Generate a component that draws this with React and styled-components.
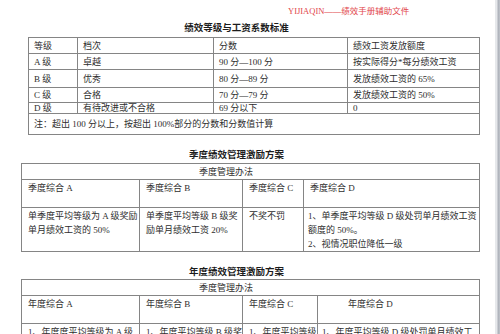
import React from "react";
import styled, { createGlobalStyle } from "styled-components";

const GlobalStyle = createGlobalStyle`
  html, body {
    margin: 0;
    padding: 0;
    background: #ffffff;
    overflow: hidden;
  }
  body {
    font-family: "Liberation Serif", "Noto Sans CJK SC", serif;
    color: #2b2b2b;
  }
`;

const Screen = styled.div`
  display: flex;
  width: 500px;
  height: 334px;
  overflow: hidden;
`;

const Page = styled.div`
  flex: 1;
  background: #fff;
  padding-left: 21px;
  padding-right: 15px;
`;

const Gutter = styled.div`
  width: 6px;
  background: linear-gradient(
    to right,
    #e6e8eb 0,
    #e6e8eb 2px,
    #aeb2ba 3px,
    #b3b7bf 4px,
    #d3d6db 6px
  );
`;

const Running = styled.div`
  height: 20px;
  padding-left: 267px;
  display: flex;
  align-items: center;
  font-size: 8.5px;
  color: #e2474c;
  white-space: nowrap;
`;

const Heading = styled.h2`
  margin: 0;
  padding-right: 28px;
  text-align: center;
  font-family: "Liberation Serif", "Noto Sans CJK SC", serif;
  font-weight: bold;
  font-size: 9.5px;
  line-height: ${(p) => p.$h}px;
  height: ${(p) => p.$h}px;
  color: #1c1c1c;
  white-space: nowrap;
`;

const Grid = styled.table`
  border-collapse: collapse;
  table-layout: fixed;
  width: ${(p) => p.$w}px;
  margin-left: ${(p) => p.$ml || 0}px;
  font-size: 9px;
`;

const Row = styled.tr`
  height: ${(p) => p.$h}px;
`;

const Cell = styled.td`
  border: 1px solid #858585;
  padding: ${(p) => (p.$top ? "1px" : "0")} 0 0 ${(p) => p.$pl ?? 5}px;
  vertical-align: ${(p) => (p.$top ? "top" : "middle")};
  line-height: ${(p) => (p.$top ? "14px" : "10px")};
  white-space: nowrap;
  overflow: hidden;
  color: #2e2e2e;
`;

const Spacer = styled.div`
  height: ${(p) => p.$h}px;
`;

const gradeRows = [
  ["A 级", "卓越", "90 分—100 分", "按实际得分*每分绩效工资", 16],
  ["B 级", "优秀", "80 分—89 分", "发放绩效工资的 65%", 18],
  ["C 级", "合格", "70 分—79 分", "发放绩效工资的 50%", 15],
  ["D 级", "有待改进或不合格", "69 分以下", "0", 11],
];

const Lines = ({ items }) =>
  items.map((t, i) => (
    <React.Fragment key={i}>
      {i > 0 && <br />}
      {t}
    </React.Fragment>
  ));

const PlanTable = ({ cols, heads, headPad = [], body, bodyH }) => (
  <Grid $w={458}>
    <colgroup>
      {cols.map((w, i) => (
        <col key={i} style={{ width: w }} />
      ))}
    </colgroup>
    <tbody>
      <Row $h={16}>
        <Cell colSpan={4} $pl={177}>
          季度管理办法
        </Cell>
      </Row>
      <Row $h={28}>
        {heads.map((h, i) => (
          <Cell key={h} $top $pl={headPad[i] ?? 6}>
            {h}
          </Cell>
        ))}
      </Row>
      <Row $h={bodyH}>
        {body.map((lines, i) => (
          <Cell key={i} $top $pl={i === 3 ? 4 : 6}>
            <Lines items={lines} />
          </Cell>
        ))}
      </Row>
    </tbody>
  </Grid>
);

export default function App() {
  return (
    <>
      <GlobalStyle />
      <Screen>
        <Page>
          <Running>YIJIAQIN——绩效手册辅助文件</Running>
          <Heading $h={17}>绩效等级与工资系数标准</Heading>
          <Grid $w={451} $ml={7}>
            <colgroup>
              <col style={{ width: 49 }} />
              <col style={{ width: 136 }} />
              <col style={{ width: 134 }} />
              <col style={{ width: 132 }} />
            </colgroup>
            <tbody>
              <Row $h={16}>
                <Cell>等级</Cell>
                <Cell>档次</Cell>
                <Cell>分数</Cell>
                <Cell>绩效工资发放额度</Cell>
              </Row>
              {gradeRows.map(([g, lvl, score, pay, h]) => (
                <Row key={g} $h={h}>
                  <Cell>{g}</Cell>
                  <Cell>{lvl}</Cell>
                  <Cell>{score}</Cell>
                  <Cell>{pay}</Cell>
                </Row>
              ))}
              <Row $h={21}>
                <Cell colSpan={4}>
                  注：超出 100 分以上，按超出 100%部分的分数和分数值计算
                </Cell>
              </Row>
            </tbody>
          </Grid>
          <Spacer $h={12} />
          <Heading $h={16}>季度绩效管理激励方案</Heading>
          <PlanTable
            cols={[118, 103, 61, 176]}
            heads={["季度综合 A", "季度综合 B", "季度综合 C", "季度综合 D"]}
            bodyH={44}
            body={[
              ["单季度平均等级为 A 级奖励", "单月绩效工资的 50%"],
              ["单季度平均等级 B 级奖", "励单月绩效工资 20%"],
              ["不奖不罚"],
              [
                "1、单季度平均等级 D 级处罚单月绩效工资",
                "额度的 50%。",
                "2、视情况职位降低一级",
              ],
            ]}
          />
          <Spacer $h={13} />
          <Heading $h={14}>年度绩效管理激励方案</Heading>
          <PlanTable
            cols={[118, 103, 75, 162]}
            heads={["年度综合 A", "年度综合 B", "年度综合 C", "年度综合 D"]}
            headPad={[6, 6, 6, 30]}
            bodyH={40}
            body={[
              ["1、年度度平均等级为 A 级"],
              ["1、年度平均等级 B 级奖"],
              ["1、年度平均等级 C"],
              ["1、年度平均等级 D 级处罚单月绩效工"],
            ]}
          />
        </Page>
        <Gutter />
      </Screen>
    </>
  );
}
